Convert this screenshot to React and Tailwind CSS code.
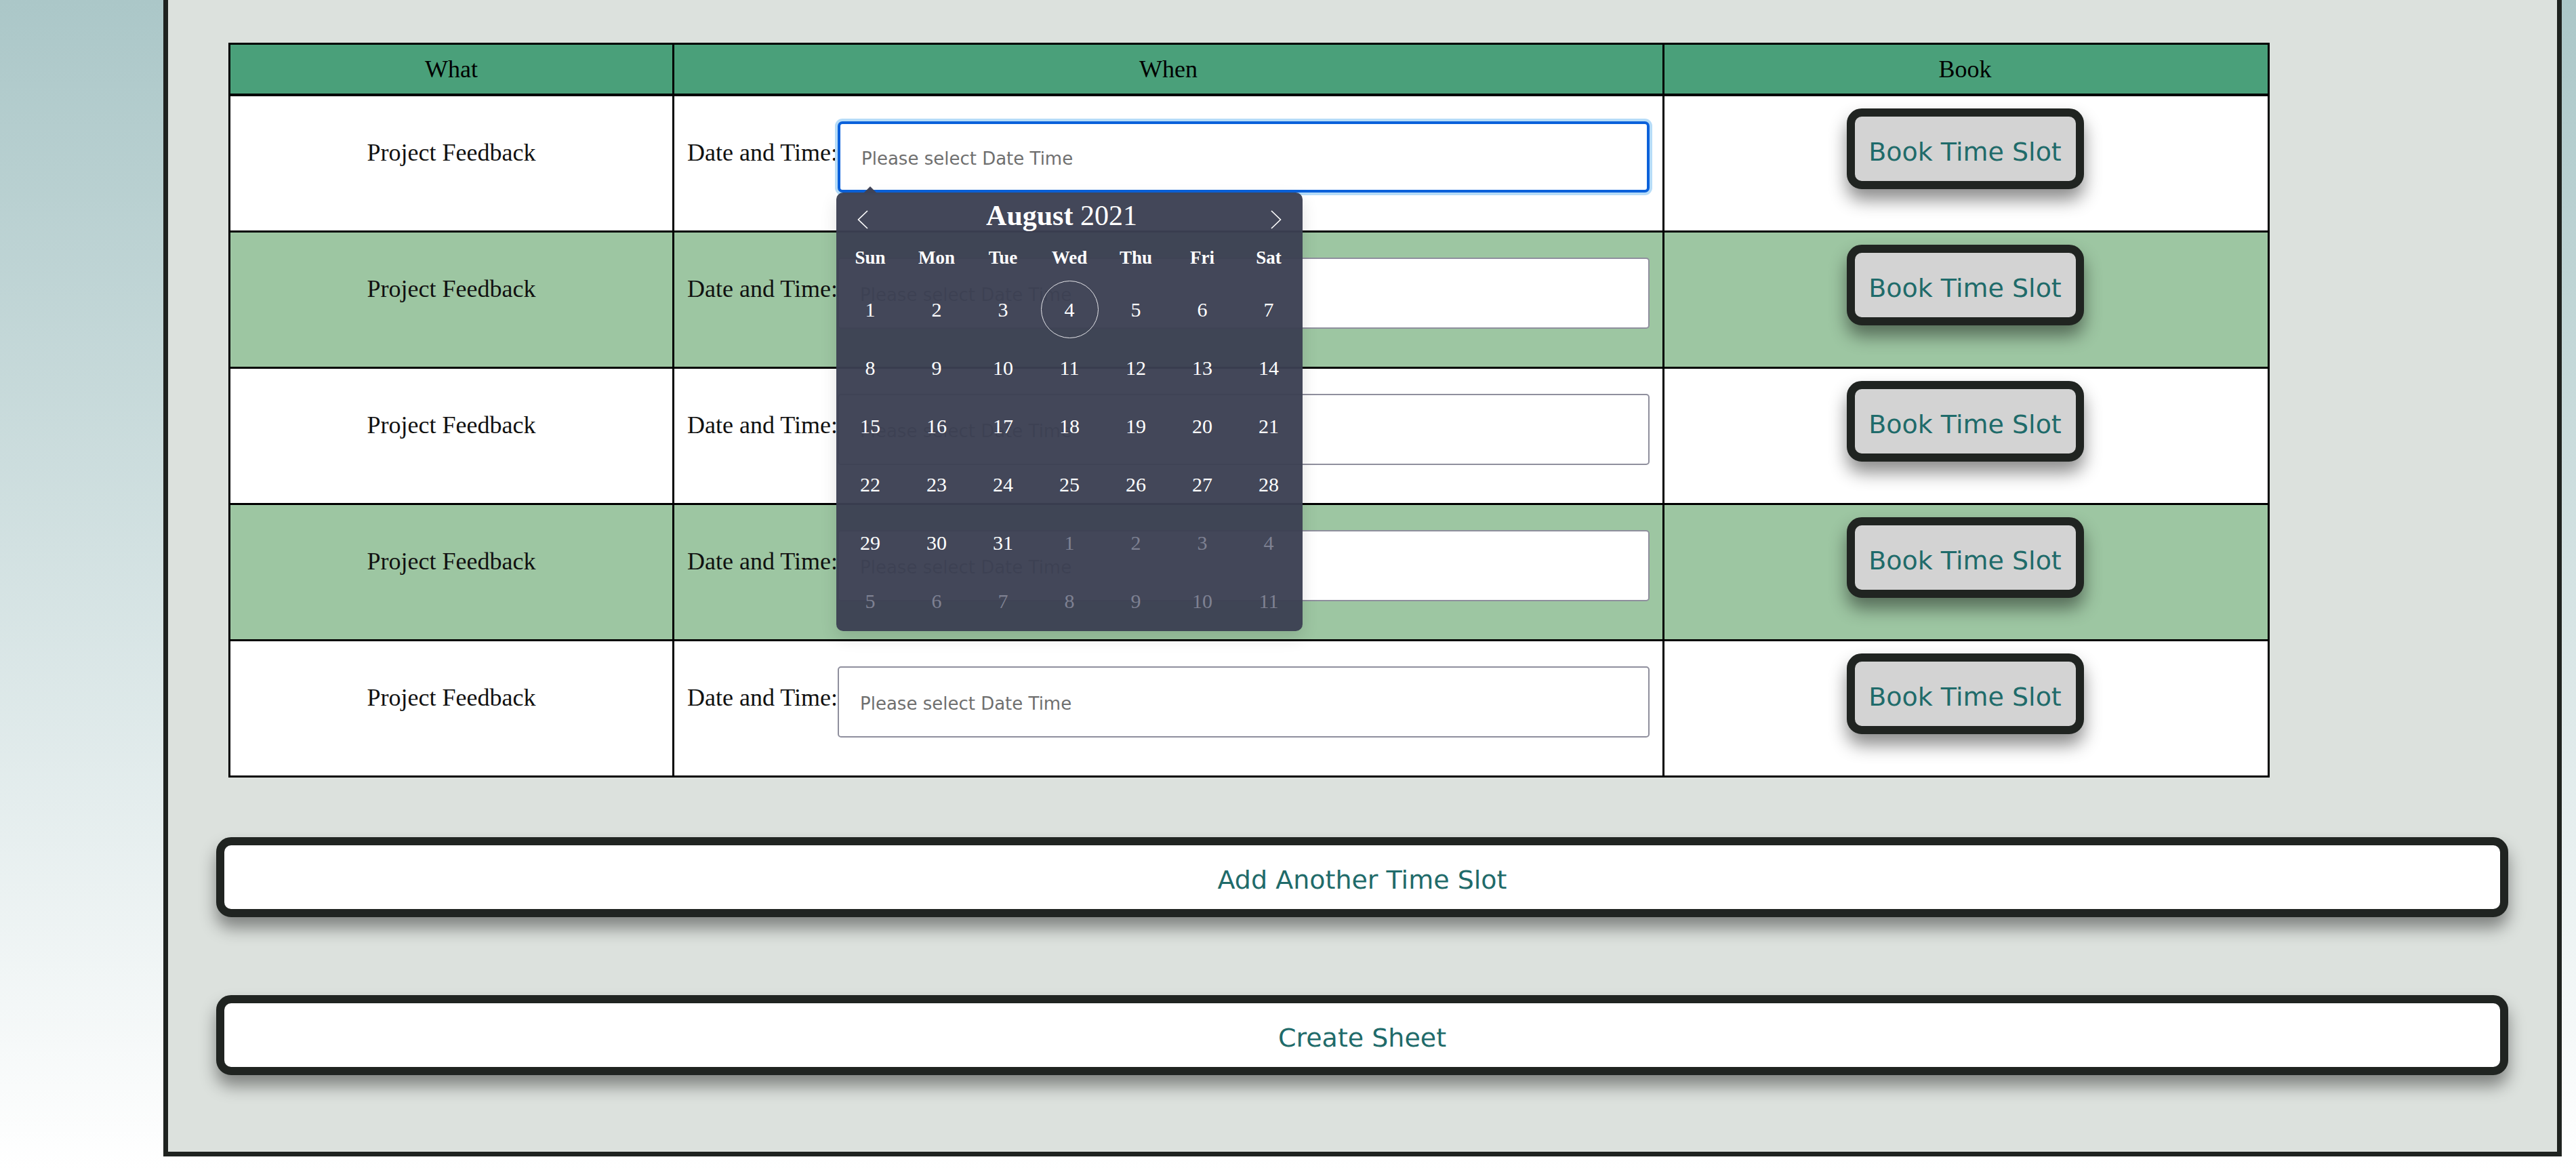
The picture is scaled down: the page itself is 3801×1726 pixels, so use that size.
import React from "react";

const serif = "font-['Liberation_Serif','Times_New_Roman',serif]";
const sans = "font-['DejaVu_Sans','Verdana',sans-serif]";

const weekDays = ["Sun", "Mon", "Tue", "Wed", "Thu", "Fri", "Sat"];

// August 2021 grid, m = day from next month
const weeks = [
  [1, 2, 3, 4, 5, 6, 7],
  [8, 9, 10, 11, 12, 13, 14],
  [15, 16, 17, 18, 19, 20, 21],
  [22, 23, 24, 25, 26, 27, 28],
  [29, 30, 31, "1m", "2m", "3m", "4m"],
  ["5m", "6m", "7m", "8m", "9m", "10m", "11m"],
];

const Chevron = ({ dir }) => (
  <svg width="16" height="28" viewBox="0 0 16 28" className="mt-[7px]">
    <polyline
      points={dir === "left" ? "15,1 1.5,14 15,27" : "1,1 14.5,14 1,27"}
      fill="none"
      stroke="#ffffff"
      strokeWidth="1.6"
    />
  </svg>
);

const Calendar = () => (
  <div className="absolute -left-[2px] top-full z-20 w-[688px] h-[647px] rounded-[10px] bg-[rgba(59,63,82,0.96)] px-[1px] shadow-[0_10px_24px_rgba(0,0,0,0.12)]">
    <div className="absolute -top-[9px] left-[40px] w-0 h-0 border-x-[10px] border-x-transparent border-b-[10px] border-b-[#3f4356]" />
    <div className={`flex h-[72px] items-center justify-between px-[30px] ${serif} text-white`}>
      <Chevron dir="left" />
      <div className="flex-1 text-center text-[42px] leading-none pr-[23px] mb-[4px]">
        <span className="font-bold">August</span> 2021
      </div>
      <Chevron dir="right" />
    </div>
    <div className={`grid grid-cols-7 h-[48px] items-center ${serif} text-[27px] font-bold text-white`}>
      {weekDays.map((d) => (
        <div key={d} className="text-center">{d}</div>
      ))}
    </div>
    <div className={`mt-[9px] grid grid-cols-7 ${serif} text-[30px]`}>
      {weeks.flat().map((d, i) => {
        const muted = typeof d === "string";
        const label = muted ? d.replace("m", "") : d;
        return (
          <div key={i} className="flex h-[86px] items-center justify-center">
            {d === 4 ? (
              <span className="flex h-[85px] w-[85px] items-center justify-center rounded-full border-[1.5px] border-[#e6e6ea] text-white">
                {label}
              </span>
            ) : (
              <span className={muted ? "text-[#7e8192]" : "text-white"}>{label}</span>
            )}
          </div>
        );
      })}
    </div>
  </div>
);

const Row = ({ index }) => {
  const alt = index % 2 === 1;
  const focused = index === 0;
  return (
    <div className={`flex h-[201px] border-b-[3px] border-black ${alt ? "bg-[#9dc6a2]" : "bg-white"}`}>
      <div className={`w-[655px] border-r-[3px] border-black pt-[63px] text-center ${serif} text-[36px] leading-[41px] text-[#111]`}>
        Project Feedback
      </div>
      <div className="relative flex w-[1461px] items-start border-r-[3px] border-black pl-[19px] pr-[19px]">
        <span className={`pt-[63px] ${serif} text-[36px] leading-[41px] whitespace-nowrap text-[#111]`}>
          Date and Time:
        </span>
        <div className="relative ml-auto mt-[37px] w-[1203px]">
          <input
            readOnly
            placeholder="Please select Date Time"
            className={`block h-[105px] w-full bg-white pl-[31px] pt-[4px] ${sans} text-[26px] placeholder:text-[#6f6f6f] outline-none ${
              focused
                ? "rounded-[7px] border-[4px] border-[#0b61da] shadow-[0_0_0_4px_#b6dcf8]"
                : "rounded-[5px] border-2 border-[#8f8f9d]"
            }`}
          />
          {focused && <Calendar />}
        </div>
      </div>
      <div className="flex w-[887px] justify-center pt-[18px]">
        <button
          className={`h-[119px] w-[350px] rounded-[22px] border-[12px] border-[#202421] bg-[#d3d3d3] pt-[9px] ${sans} text-[38px] text-[#1f6b6a] shadow-[0_16px_26px_rgba(0,0,0,0.45)]`}
        >
          Book Time Slot
        </button>
      </div>
    </div>
  );
};

const WideButton = ({ children, className = "" }) => (
  <button
    className={`block h-[118px] w-[3382px] ml-[71px] rounded-[22px] border-[12px] border-[#202421] bg-white pt-[9px] ${sans} text-[38px] text-[#1f6b6a] shadow-[0_16px_24px_rgba(0,0,0,0.42)] ${className}`}
  >
    {children}
  </button>
);

export default function App() {
  return (
    <div className="min-h-[1726px] w-full bg-gradient-to-b from-[#abc7c8] to-[#ffffff] pl-[241px] pr-[21px]">
      <div className="border-[7px] border-t-0 border-[#1f2320] bg-[#dce1dd] pt-[63px] pb-[113px]">
        <div className="ml-[89px] w-[3012px] border-x-[3px] border-t-[3px] border-black">
          <div className={`flex h-[76px] border-b-[4px] border-black bg-[#4aa07a] ${serif} text-[36px] text-black`}>
            <div className="flex w-[655px] items-center justify-center border-r-[3px] border-black">What</div>
            <div className="flex w-[1461px] items-center justify-center border-r-[3px] border-black">When</div>
            <div className="flex w-[887px] items-center justify-center">Book</div>
          </div>
          {[0, 1, 2, 3, 4].map((i) => (
            <Row key={i} index={i} />
          ))}
        </div>
        <WideButton className="mt-[88px]">Add Another Time Slot</WideButton>
        <WideButton className="mt-[115px]">Create Sheet</WideButton>
      </div>
    </div>
  );
}
